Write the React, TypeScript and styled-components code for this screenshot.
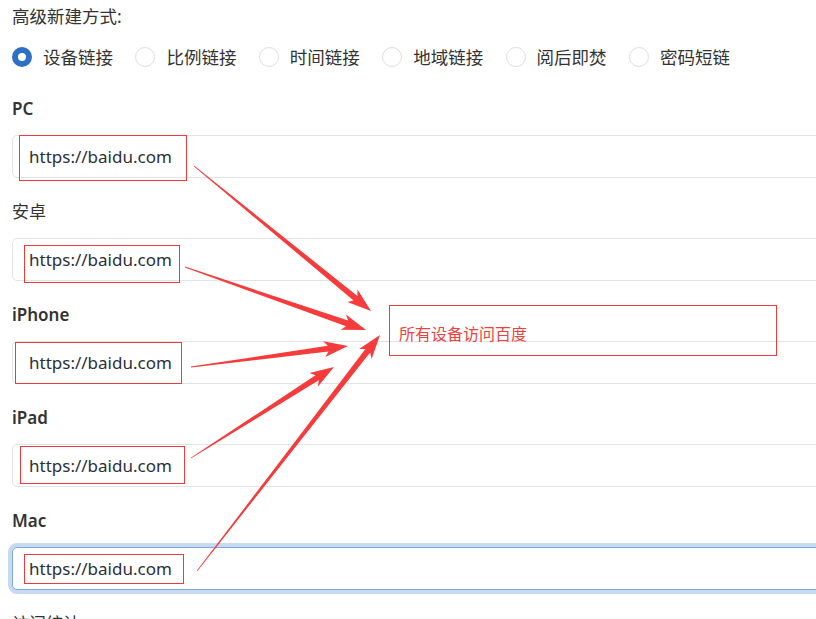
import styled, { createGlobalStyle } from "styled-components";

const GlobalStyle = createGlobalStyle`
  html, body {
    margin: 0;
    padding: 0;
    background: #fff;
    overflow: hidden;
  }
  body {
    font-family: "Noto Sans", "Noto Sans CJK SC", sans-serif;
    color: #333;
  }
`;

const Page = styled.div`
  position: relative;
  width: 816px;
  height: 619px;
  overflow: hidden;
  padding: 3px 0 0 12px;
  box-sizing: border-box;
`;

const Title = styled.div`
  font-size: 17.5px;
  line-height: 26px;
  color: #333;
`;

const RadioRow = styled.div`
  display: flex;
  align-items: center;
  height: 24px;
  margin-top: 16px;
  margin-bottom: 27px;
  gap: 22.4px;
`;

const RadioItem = styled.label`
  display: flex;
  align-items: center;
  gap: 11px;
  font-size: 17.5px;
  line-height: 24px;
  color: #333;
  white-space: nowrap;
`;

const Circle = styled.span<{ $checked?: boolean }>`
  width: 20px;
  height: 20px;
  border-radius: 50%;
  box-sizing: border-box;
  flex-shrink: 0;
  border: ${(p) => (p.$checked ? "6px solid #2c6fc4" : "1px solid #dedede")};
  background: #fff;
`;

const FieldLabel = styled.div<{ $bold?: boolean }>`
  font-size: 17px;
  line-height: 26px;
  font-weight: ${(p) => (p.$bold ? 600 : 400)};
  color: #333;
  margin-bottom: 13px;
`;

const Input = styled.input<{ $focused?: boolean }>`
  display: block;
  width: 900px;
  height: 43px;
  box-sizing: border-box;
  padding: 0 16px;
  margin: 0 0 21px 0;
  border-radius: 5px;
  font-family: "Noto Sans", "Noto Sans CJK SC", sans-serif;
  font-size: 17px;
  color: #2b2f38;
  outline: none;
  border: 1px solid ${(p) => (p.$focused ? "#80a8dc" : "#e2e3e6")};
  box-shadow: ${(p) => (p.$focused ? "0 0 0 4px #c8daf1" : "none")};
  background: #fff;
`;

const RedBox = styled.div`
  position: absolute;
  border: 1px solid #ee3a3a;
  box-sizing: border-box;
  pointer-events: none;
`;

const Note = styled(RedBox)`
  display: flex;
  align-items: center;
  padding: 5px 0 0 9px;
  font-size: 16px;
  color: #ef4040;
`;

const Overlay = styled.svg`
  position: absolute;
  left: 0;
  top: 0;
  pointer-events: none;
`;

const modes = ["设备链接", "比例链接", "时间链接", "地域链接", "阅后即焚", "密码短链"];

const fields = [
  { label: "PC", bold: true },
  { label: "安卓", bold: false },
  { label: "iPhone", bold: true },
  { label: "iPad", bold: true },
  { label: "Mac", bold: true, focused: true },
  { label: "访问统计", bold: false },
];

// annotation boxes [x, y, w, h]
const boxes = [
  [19, 135, 168, 46],
  [24, 245, 156, 38],
  [15, 342, 167, 42],
  [20, 446, 165, 38],
  [24, 554, 160, 30],
];

// arrows: tail -> tip
const arrows = [
  [194, 166, 371, 311],
  [185, 267, 366, 330],
  [191, 367, 348, 346],
  [191, 458, 334, 367],
  [197, 571, 380, 335],
];

function arrowPoints(x1: number, y1: number, x2: number, y2: number) {
  const dx = x2 - x1;
  const dy = y2 - y1;
  const len = Math.hypot(dx, dy);
  const ux = dx / len;
  const uy = dy / len;
  const nx = -uy;
  const ny = ux;
  const headLen = 24;
  const headW = 8;
  const neckW = 3;
  const barbBack = 4;
  const bx = x2 - ux * headLen;
  const by = y2 - uy * headLen;
  const nkx = bx + ux * barbBack;
  const nky = by + uy * barbBack;
  const pts = [
    [x1 + nx * 0.4, y1 + ny * 0.4],
    [nkx + nx * neckW, nky + ny * neckW],
    [bx + nx * headW, by + ny * headW],
    [x2, y2],
    [bx - nx * headW, by - ny * headW],
    [nkx - nx * neckW, nky - ny * neckW],
    [x1 - nx * 0.4, y1 - ny * 0.4],
  ];
  return pts.map((p) => `${p[0].toFixed(1)},${p[1].toFixed(1)}`).join(" ");
}

export default function App() {
  return (
    <>
      <GlobalStyle />
      <Page>
        <Title>高级新建方式:</Title>
        <RadioRow>
          {modes.map((m, i) => (
            <RadioItem key={m}>
              <Circle $checked={i === 0} />
              {m}
            </RadioItem>
          ))}
        </RadioRow>
        {fields.map((f) => (
          <div key={f.label}>
            <FieldLabel $bold={f.bold}>{f.label}</FieldLabel>
            <Input readOnly value="https://baidu.com" $focused={f.focused} />
          </div>
        ))}

        {boxes.map((b, i) => (
          <RedBox
            key={i}
            style={{ left: b[0], top: b[1], width: b[2], height: b[3] }}
          />
        ))}
        <Note style={{ left: 389, top: 305, width: 388, height: 51 }}>
          所有设备访问百度
        </Note>
        <Overlay width={816} height={619}>
          {arrows.map((a, i) => (
            <polygon key={i} points={arrowPoints(a[0], a[1], a[2], a[3])} fill="#f53b3b" />
          ))}
        </Overlay>
      </Page>
    </>
  );
}
